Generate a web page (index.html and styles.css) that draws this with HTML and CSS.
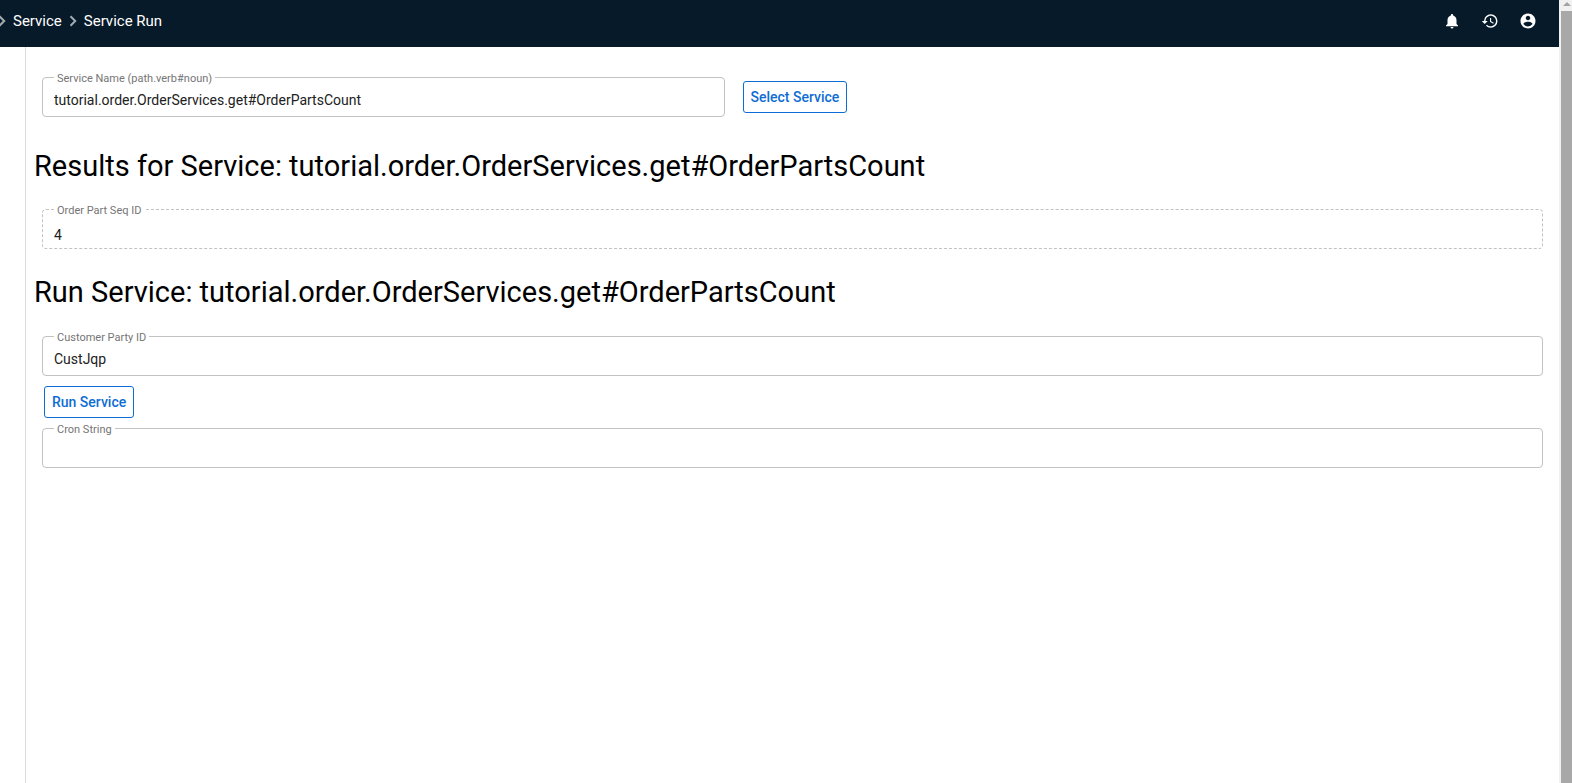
FILE: index.html
```html
<!DOCTYPE html>
<html lang="en">
<head>
<meta charset="utf-8">
<title>Service Run</title>
<link rel="stylesheet" href="styles.css">
</head>
<body>
<div class="app">
  <div class="view">
    <header class="topbar">
      <nav class="crumbs" aria-label="Breadcrumb">
        <svg class="chevron chevron-cut" viewBox="0 0 8 12" aria-hidden="true"><path d="M1.500 1.300 6.200 6l-4.700 4.700"/></svg>
        <a href="#service">Service</a>
        <svg class="chevron" viewBox="0 0 8 12" aria-hidden="true"><path d="M1.500 1.300 6.200 6l-4.700 4.700"/></svg>
        <a href="#run">Service Run</a>
      </nav>
      <div class="tools">
        <button class="tool" type="button" aria-label="Notifications"><svg viewBox="0 0 24 24"><path d="M12 22c1.100 0 2-.9 2-2h-4c0 1.100.89 2 2 2zm6-6v-5c0-3.070-1.640-5.640-4.500-6.320V4c0-.83-.67-1.500-1.500-1.500s-1.500.67-1.500 1.500v.68C7.630 5.360 6 7.920 6 11v5l-2 2v1h16v-1l-2-2z"/></svg></button>
        <button class="tool" type="button" aria-label="History"><svg viewBox="0 0 24 24"><path d="M13 3a9 9 0 0 0-9 9H1l3.890 3.890.07.14L9 12H6c0-3.870 3.130-7 7-7s7 3.130 7 7-3.130 7-7 7c-1.930 0-3.680-.79-4.940-2.060l-1.420 1.420A8.954 8.954 0 0 0 13 21a9 9 0 0 0 0-18zm-1 5v5l4.280 2.540.72-1.210-3.500-2.080V8H12z"/></svg></button>
        <button class="tool" type="button" aria-label="Account"><svg viewBox="0 0 24 24"><path d="M12 2C6.480 2 2 6.480 2 12s4.480 10 10 10 10-4.480 10-10S17.520 2 12 2zm0 3c1.660 0 3 1.340 3 3s-1.340 3-3 3-3-1.340-3-3 1.340-3 3-3zm0 14.200a7.200 7.200 0 0 1-6-3.220c.03-1.990 4-3.080 6-3.080 1.990 0 5.970 1.090 6 3.080a7.200 7.200 0 0 1-6 3.220z"/></svg></button>
      </div>
    </header>
    <main class="content">
      <form class="select-form">
        <fieldset class="field field-name">
          <legend><label for="service-name">Service Name (path.verb#noun)</label></legend>
          <input id="service-name" type="text" value="tutorial.order.OrderServices.get#OrderPartsCount">
        </fieldset>
        <button class="btn" type="button">Select Service</button>
      </form>
      <h1 class="title title-results">Results for Service: tutorial.order.OrderServices.get#OrderPartsCount</h1>
      <div class="panel">
        <fieldset class="field field-readonly">
          <legend><label for="seq-id">Order Part Seq ID</label></legend>
          <input id="seq-id" type="text" value="4" readonly>
        </fieldset>
      </div>
      <h1 class="title">Run Service: tutorial.order.OrderServices.get#OrderPartsCount</h1>
      <form class="panel">
        <fieldset class="field">
          <legend><label for="party-id">Customer Party ID</label></legend>
          <input id="party-id" type="text" value="CustJqp">
        </fieldset>
        <button class="btn btn-run" type="button">Run Service</button>
        <fieldset class="field">
          <legend><label for="cron">Cron String</label></legend>
          <input id="cron" type="text">
        </fieldset>
      </form>
    </main>
  </div>
  <div class="scrollbar" aria-hidden="true">
    <svg class="arrow" viewBox="0 0 8 4"><path d="M0 4 4 0l4 4z"/></svg>
    <div class="thumb"></div>
  </div>
</div>
</body>
</html>
```

FILE: styles.css
```css
* {
  box-sizing: border-box;
}

body {
  margin: 0;
  background: #fff;
  color: #000;
  font: 14px/20px Roboto, sans-serif;
}

.app {
  display: flex;
  height: 100vh;
}

.view {
  display: flex;
  flex: 1;
  flex-direction: column;
  min-width: 0;
}

.topbar {
  display: flex;
  align-items: center;
  justify-content: space-between;
  height: 47px;
  padding: 0 22px 5px 0;
  background: #071a29;
}

.crumbs {
  display: flex;
  align-items: center;
  gap: 7px;
}

.crumbs a {
  color: #fff;
  font-size: 15px;
  text-decoration: none;
}

.chevron {
  width: 8px;
  height: 12px;
  fill: none;
  stroke: #a4abb1;
  stroke-width: 2;
}

.chevron-cut {
  margin-left: -2px;
}

.tools {
  display: flex;
  gap: 20px;
}

.tool {
  display: flex;
  padding: 0;
  border: 0;
  background: none;
}

.tool svg {
  width: 18px;
  height: 18px;
  fill: #fff;
}

.content {
  flex: 1;
  margin-left: 25px;
  padding: 23px 16px 0 8px;
  border-left: 1px solid #dcdcdc;
}

.select-form {
  display: flex;
  align-items: center;
  gap: 18px;
  padding-left: 8px;
}

.panel {
  padding-left: 8px;
}

.field {
  min-width: 0;
  height: 47px;
  margin: 0;
  padding: 0 11px;
  border: 1px solid #c2c2c2;
  border-radius: 4px;
}

.field-name {
  width: calc(50% - 68px);
}

.field legend {
  padding: 2px 3px 0;
  color: #757575;
  font-size: 11px;
  line-height: 13px;
}

.field input {
  display: block;
  width: 100%;
  height: 20px;
  margin: 5px 0 0;
  padding: 0;
  border: 0;
  outline: 0;
  background: none;
  color: #212121;
  font: 14px/20px Roboto, sans-serif;
}

.field-readonly {
  border-style: dashed;
}

.field-readonly input {
  margin-top: 8px;
}

.btn {
  height: 32px;
  padding: 0 7px;
  border: 1px solid #0e6dd4;
  border-radius: 3px;
  background: #fff;
  color: #0e6dd4;
  font: 500 14px/20px Roboto, sans-serif;
}

.select-form .btn {
  margin-top: 7px;
}

.btn-run {
  display: block;
  margin: 10px 0 3px 2px;
}

.title {
  margin: 23px 0 17px;
  font-size: 29px;
  font-weight: 400;
  line-height: 40px;
}

.title-results {
  margin: 29px 0 16px;
}

.scrollbar {
  display: flex;
  flex-direction: column;
  align-items: stretch;
  width: 13px;
  padding-left: 2px;
  background: #f1f1f1;
}

.arrow {
  align-self: center;
  width: 8px;
  height: 4px;
  margin: 2px 0 5px;
  fill: #a3a3a3;
}

.thumb {
  flex: 1;
  background: #a8a8a8;
}
```
